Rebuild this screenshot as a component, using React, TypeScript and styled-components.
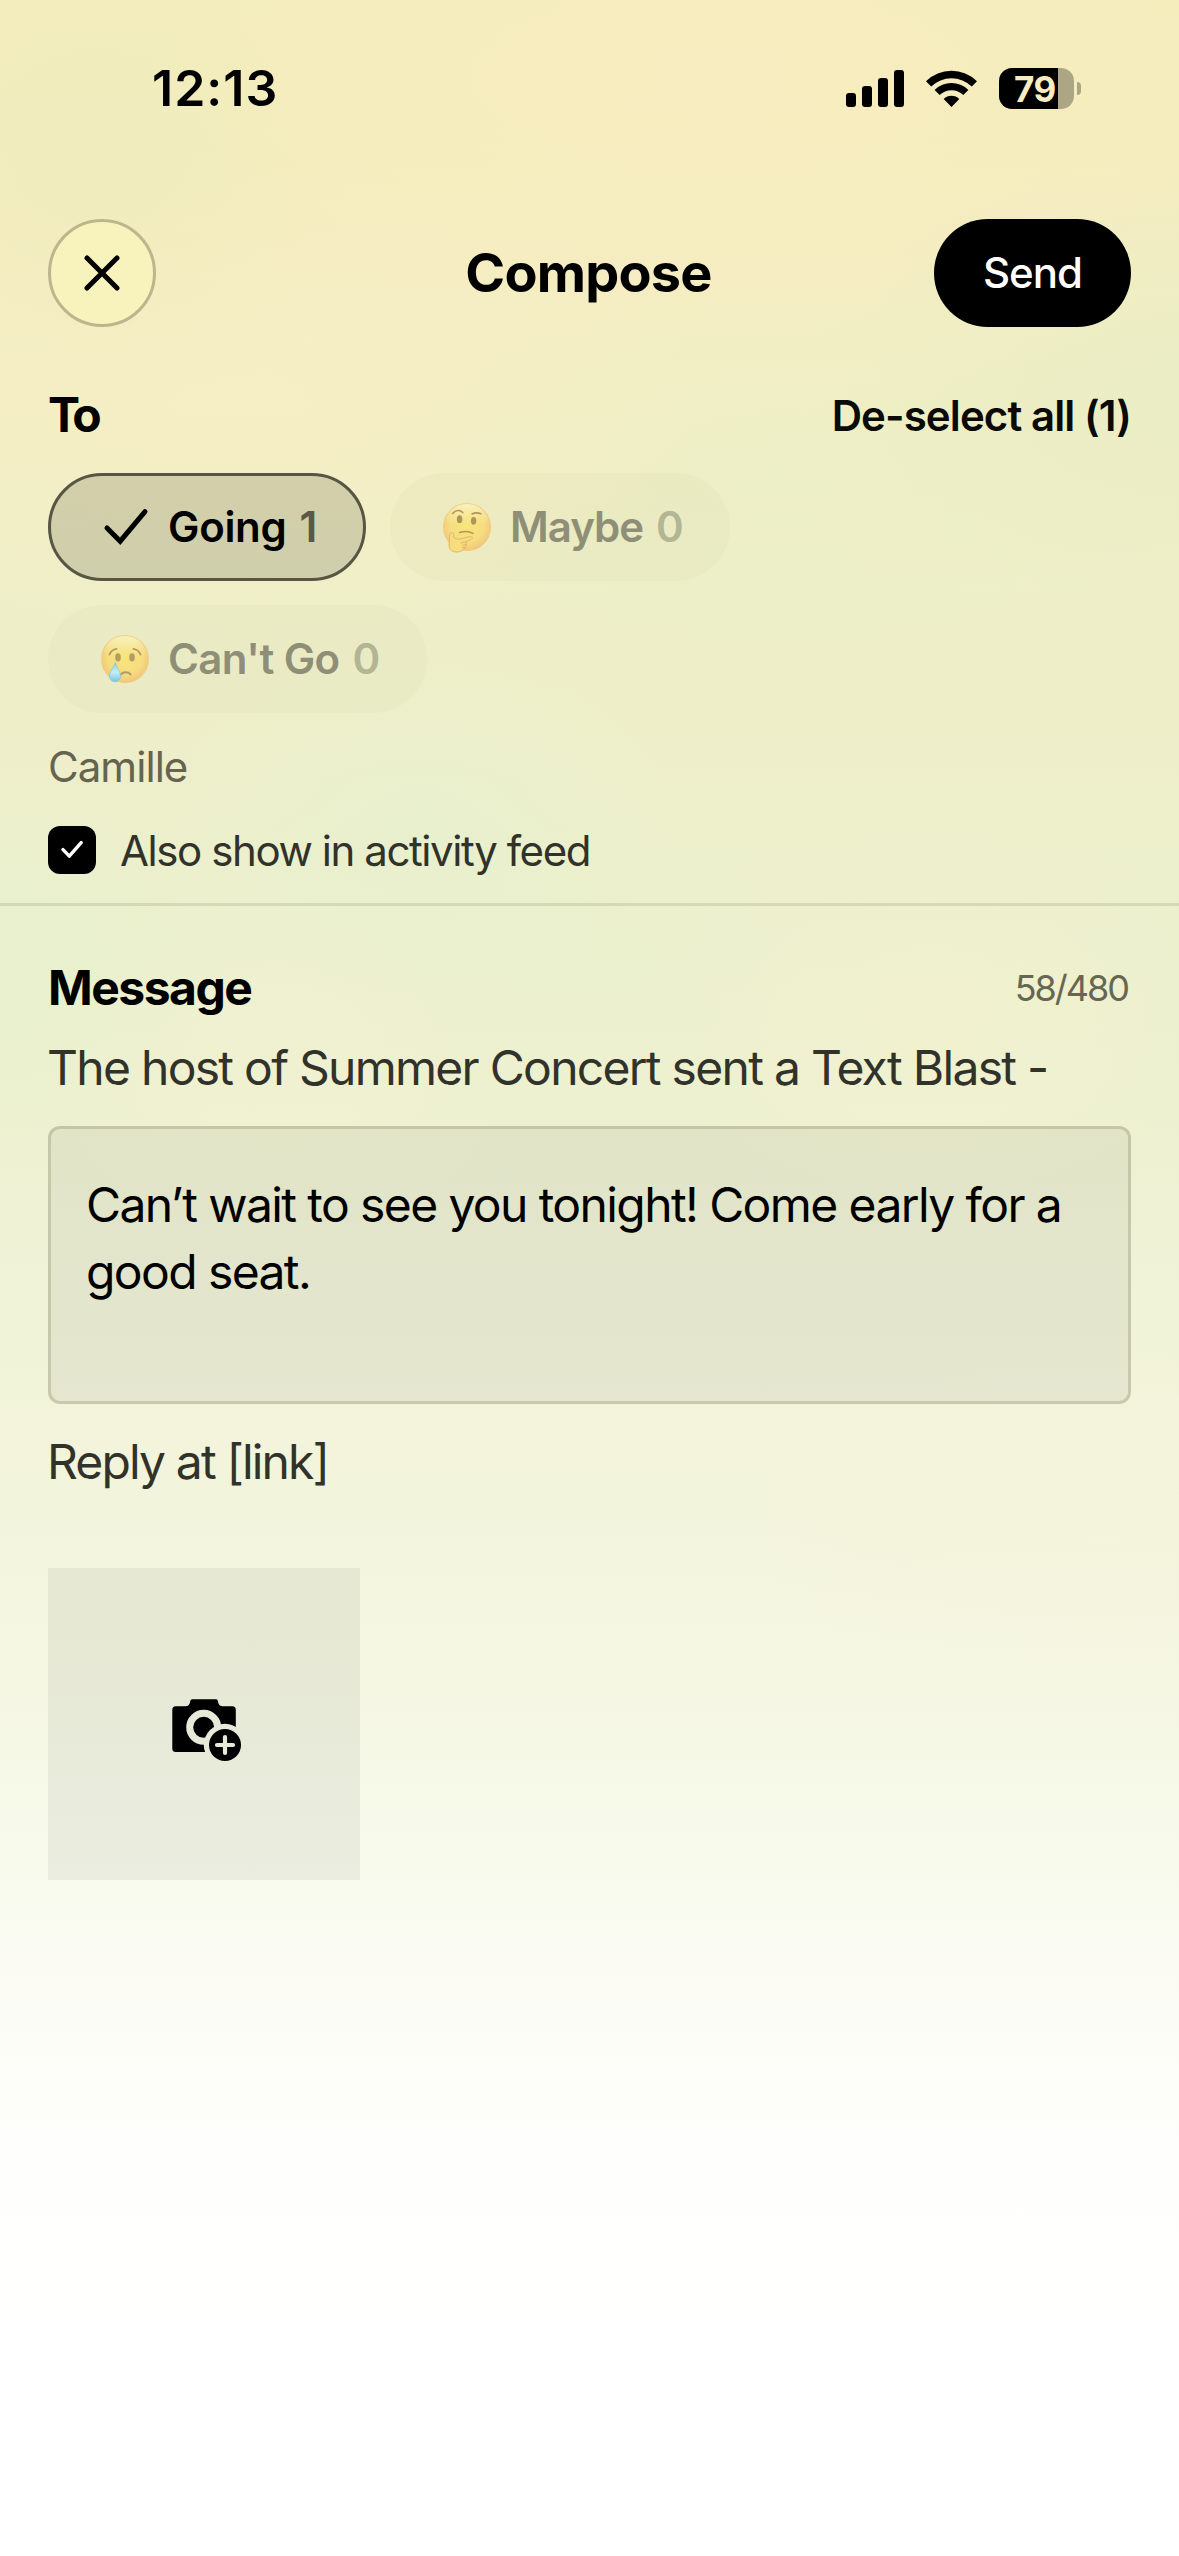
import React from "react";
import styled, { createGlobalStyle } from "styled-components";

const GlobalStyle = createGlobalStyle`
  *, *::before, *::after { box-sizing: border-box; }
  body { margin: 0; background: #fff; }
  button { font: inherit; margin: 0; padding: 0; border: 0; background: none; }
`;

const Screen = styled.main`
  min-height: 2556px;
  width: 1179px;
  overflow: hidden;
  color: #000;
  font-family: Inter, "Liberation Sans", sans-serif;
  background:
    radial-gradient(ellipse 560px 260px at 720px 60px, rgba(248, 236, 192, 0.8), rgba(248, 236, 192, 0)),
    radial-gradient(ellipse 300px 260px at 100px 150px, rgba(238, 236, 189, 0.7), rgba(238, 236, 189, 0)),
    radial-gradient(ellipse 480px 240px at 240px 400px, rgba(247, 238, 197, 0.75), rgba(247, 238, 197, 0)),
    radial-gradient(ellipse 380px 240px at 1179px 390px, rgba(233, 237, 197, 0.85), rgba(233, 237, 197, 0)),
    radial-gradient(ellipse 420px 200px at 780px 480px, rgba(235, 239, 198, 0.7), rgba(235, 239, 198, 0)),
    radial-gradient(ellipse 260px 180px at 420px 830px, rgba(231, 240, 206, 0.7), rgba(231, 240, 206, 0)),
    radial-gradient(ellipse 220px 180px at 0px 960px, rgba(232, 241, 206, 0.8), rgba(232, 241, 206, 0)),
    radial-gradient(ellipse 260px 200px at 280px 1060px, rgba(241, 241, 210, 0.8), rgba(241, 241, 210, 0)),
    radial-gradient(ellipse 300px 200px at 930px 1010px, rgba(242, 241, 207, 0.9), rgba(242, 241, 207, 0)),
    radial-gradient(ellipse 360px 180px at 1100px 1520px, rgba(246, 243, 220, 0.6), rgba(246, 243, 220, 0)),
    linear-gradient(
      180deg,
      #f4edbb 0px,
      #f5edc0 220px,
      #f3eec4 400px,
      #eeefc8 600px,
      #eeefca 760px,
      #ebf0cd 950px,
      #edf1d0 1100px,
      #f0f3d8 1300px,
      #f3f4dc 1500px,
      #f5f7e3 1680px,
      #f8faec 1860px,
      #fcfcf6 2010px,
      #fefefc 2150px,
      #ffffff 2360px
    );
`;

const StatusBar = styled.header`
  display: flex;
  align-items: center;
  justify-content: space-between;
  height: 176px;
  padding: 0 98px 0 152px;
`;

const Clock = styled.time`
  font-size: 50px;
  font-weight: 600;
  line-height: 60px;
  letter-spacing: 1px;
`;

const StatusIcons = styled.div`
  display: flex;
  align-items: center;
  gap: 22px;
`;

const Battery = styled.div`
  display: flex;
  align-items: center;
  gap: 3px;
`;

const BatteryBody = styled.span`
  width: 75px;
  height: 41px;
  padding: 1px 0 0 15px;
  border-radius: 13px;
  background: linear-gradient(90deg, #000 59px, #ada684 59px);
  color: #f6edc0;
  font-size: 35px;
  font-weight: 700;
  line-height: 41px;
  letter-spacing: -0.4px;
`;

const BatteryTip = styled.span`
  width: 4px;
  height: 13px;
  border-radius: 0 5px 5px 0;
  background: #ada684;
`;

const NavBar = styled.nav`
  display: grid;
  grid-template-columns: 1fr auto 1fr;
  align-items: center;
  margin-top: 43px;
  padding: 0 48px;
`;

const CloseButton = styled.button`
  display: grid;
  place-items: center;
  width: 108px;
  height: 108px;
  border: 3px solid #bcb68d;
  border-radius: 50%;
  background: #f8f2bd;
`;

const Title = styled.h1`
  margin: 0;
  padding-right: 2px;
  font-size: 54px;
  font-weight: 650;
  line-height: 64px;
  letter-spacing: -0.8px;
`;

const SendButton = styled.button`
  justify-self: end;
  width: 197px;
  height: 108px;
  padding-bottom: 1px;
  border-radius: 54px;
  background: #000;
  color: #fff;
  font-size: 42px;
  font-weight: 550;
  letter-spacing: -1px;
`;

const Section = styled.section`
  padding: 0 48px;
`;

const SectionHead = styled.div<{ $top: number }>`
  display: flex;
  align-items: center;
  justify-content: space-between;
  height: 60px;
  margin-top: ${(p) => p.$top}px;
`;

const Heading = styled.h2<{ $tracking: number }>`
  margin: 0;
  font-size: 48px;
  font-weight: 700;
  line-height: 60px;
  letter-spacing: ${(p) => p.$tracking}px;
`;

const TextButton = styled.button`
  padding-top: 2px;
  color: #0a0a08;
  font-size: 42px;
  font-weight: 580;
  line-height: 60px;
  letter-spacing: -0.9px;
`;

const Chips = styled.div`
  display: flex;
  flex-wrap: wrap;
  gap: 24px;
  margin-top: 28px;
`;

const Chip = styled.button<{ $selected?: boolean; $width: number }>`
  display: flex;
  align-items: center;
  width: ${(p) => p.$width}px;
  height: 108px;
  padding-left: ${(p) => (p.$selected ? 48 : 51)}px;
  border: ${(p) => (p.$selected ? "3px solid #575544" : "0")};
  border-radius: 54px;
  background: ${(p) => (p.$selected ? "rgba(0, 0, 0, 0.135)" : "rgba(70, 80, 0, 0.024)")};
  color: ${(p) => (p.$selected ? "#000" : "#8f8f78")};
  font-size: 42px;
  font-weight: 580;
`;

const ChipLabel = styled.span<{ $tracking: number }>`
  margin: -1px 0 0 17px;
  letter-spacing: ${(p) => p.$tracking}px;
`;

const ChipCount = styled.span<{ $selected?: boolean }>`
  margin: -1px 0 0 13px;
  color: ${(p) => (p.$selected ? "#5a5848" : "#b3b593")};
`;

const Recipients = styled.p`
  margin: 24px 0 0;
  color: #64644f;
  font-size: 42px;
  line-height: 60px;
  letter-spacing: -0.95px;
`;

const CheckRow = styled.label`
  display: flex;
  align-items: center;
  gap: 24px;
  height: 48px;
  margin-top: 29px;
  color: #31322a;
  font-size: 42px;
  letter-spacing: -1.42px;
`;

const CheckBox = styled.span`
  display: block;
  width: 48px;
  height: 48px;
  border-radius: 12px;
  background: #000;
`;

const Divider = styled.hr`
  height: 3px;
  margin: 29px 0 0;
  border: 0;
  background: rgba(60, 60, 20, 0.13);
`;

const Counter = styled.span`
  padding-right: 3px;
  color: #666753;
  font-size: 36px;
  line-height: 60px;
  letter-spacing: -2px;
`;

const MessageFrame = styled.p<{ $top: number; $tracking: number }>`
  margin: ${(p) => p.$top}px 0 0 -1px;
  color: #31322a;
  font-size: 48px;
  line-height: 60px;
  letter-spacing: ${(p) => p.$tracking}px;
  white-space: nowrap;
`;

const MessageBox = styled.div`
  height: 278px;
  margin-top: 28px;
  padding: 42px 35px;
  border: 3px solid rgba(50, 50, 20, 0.22);
  border-radius: 12px;
  background: rgba(20, 20, 20, 0.055);
  background-clip: padding-box;
  font-size: 48px;
  line-height: 67.2px;
  letter-spacing: -1.6px;
`;

const PhotoTile = styled.button`
  display: grid;
  place-items: center;
  width: 312px;
  height: 312px;
  margin-top: 76px;
  background: rgba(20, 20, 20, 0.06);
`;

const Glyph = styled.svg`
  display: block;
  flex: none;
`;

const SignalIcon = () => (
  <Glyph width="58" height="37" viewBox="0 0 58 37">
    <rect x="0" y="23" width="10" height="14" rx="3" />
    <rect x="16" y="16" width="10" height="21" rx="3" />
    <rect x="32" y="8" width="10" height="29" rx="3" />
    <rect x="48" y="0" width="10" height="37" rx="3" />
  </Glyph>
);

const WifiIcon = () => (
  <Glyph width="51" height="37" viewBox="0 0 51 37">
    <path d="M0 11.2A36.6 36.6 0 0 1 51 11.2L45.8 16.5A29.1 29.1 0 0 0 5.2 16.5Z" />
    <path d="M8.6 19.9A24.2 24.2 0 0 1 42.4 19.9L37.3 25A17 17 0 0 0 13.7 25Z" />
    <path d="M17.7 28.9A11.3 11.3 0 0 1 33.3 28.9L25.5 37Z" />
  </Glyph>
);

const CloseIcon = () => (
  <Glyph width="36" height="36" viewBox="0 0 36 36" stroke="#000" strokeWidth="5" strokeLinecap="round">
    <path d="M3 3L33 33M33 3L3 33" />
  </Glyph>
);

const ChipCheck = () => (
  <Glyph width="52" height="52" viewBox="0 0 52 52" fill="none" stroke="#000" strokeWidth="5" strokeLinecap="round" strokeLinejoin="miter">
    <path d="M8 27L21.2 40.2L46 10.6" />
  </Glyph>
);

const BoxCheck = () => (
  <Glyph width="48" height="48" viewBox="0 0 48 48" fill="none" stroke="#fff" strokeWidth="3.4" strokeLinecap="round" strokeLinejoin="round">
    <path d="M15 23.6L21.3 30.2L33.2 16.6" />
  </Glyph>
);

const FaceFill = ({ id }: { id: string }) => (
  <defs>
    <radialGradient id={id} cx="0.5" cy="0.46" r="0.54">
      <stop offset="0" stopColor="#f7e67a" />
      <stop offset="0.65" stopColor="#f6dd80" />
      <stop offset="1" stopColor="#f0c67a" />
    </radialGradient>
    <linearGradient id={`${id}Shine`} x1="0" y1="0" x2="0" y2="1">
      <stop offset="0" stopColor="#f8f4c4" stopOpacity="0.95" />
      <stop offset="0.45" stopColor="#f8f0b0" stopOpacity="0" />
    </linearGradient>
  </defs>
);

const ThinkingFace = () => (
  <Glyph width="52" height="52" viewBox="0 0 52 52">
    <FaceFill id="thinking" />
    <circle cx="26" cy="26" r="24" fill="url(#thinking)" />
    <circle cx="26" cy="25.5" r="22.6" fill="url(#thinkingShine)" />
    <g fill="none" stroke="#b3945c" strokeWidth="1.6" strokeLinecap="round">
      <path d="M11.6 12.4C14.5 8.6 19.4 8.6 21.8 11.6" />
      <path d="M31 13C34 11.5 37 11.6 39.8 12.8" />
      <path d="M18.6 31.6C23 30 28.5 30.4 32 32.4" />
    </g>
    <ellipse cx="18.6" cy="18.2" rx="2.7" ry="3.9" fill="#ad955c" />
    <ellipse cx="32.6" cy="19.8" rx="2.7" ry="3.9" fill="#ad955c" />
    <path
      d="M10.3 31.6C12.2 31.2 13 33.4 12.8 36.2C14.4 38.2 16.4 38.6 19 37.9L29.5 35.6C31.8 35.2 32 37.4 30 38.4L25.2 40.6C26 44.8 22.5 50.8 16.2 51C9.6 51.2 7.4 47.6 8.2 42L8.8 33.4C8.9 32.2 9.4 31.7 10.3 31.6Z"
      fill="#f7dd7d"
      stroke="#e4b064"
      strokeWidth="0.9"
    />
    <path d="M24.8 40.8L20 42M25.4 43.8L21.6 44.2M24.4 46.8L21.4 46.4" stroke="#e0ad62" strokeWidth="0.9" strokeLinecap="round" />
  </Glyph>
);

const CryingFace = () => (
  <Glyph width="52" height="52" viewBox="0 0 52 52">
    <FaceFill id="crying" />
    <linearGradient id="tear" x1="0" y1="0" x2="0" y2="1">
      <stop offset="0" stopColor="#86cfe0" />
      <stop offset="0.5" stopColor="#c6eef0" />
      <stop offset="1" stopColor="#74c6e4" />
    </linearGradient>
    <circle cx="26" cy="26" r="24" fill="url(#crying)" />
    <circle cx="26" cy="25.5" r="22.6" fill="url(#cryingShine)" />
    <g fill="none" stroke="#b39a63" strokeWidth="1.7" strokeLinecap="round">
      <path d="M10.4 21.6C11.8 18.2 14.4 16.3 17.6 15.9" />
      <path d="M41.6 21.6C40.2 18.2 37.6 16.3 34.4 15.9" />
      <path d="M21.8 41.4C24.4 38.6 29 38.6 31.6 41.4" strokeWidth="2" />
    </g>
    <ellipse cx="19" cy="24.4" rx="2.8" ry="4.1" fill="#b39d62" />
    <ellipse cx="33" cy="24.4" rx="2.8" ry="4.1" fill="#b39d62" />
    <path d="M16.2 29.4C17.8 35 21.6 38.6 21.6 43A5.6 5.8 0 0 1 10.4 43C10.4 38.6 14.6 35 16.2 29.4Z" fill="url(#tear)" stroke="#7cc6d8" strokeWidth="0.7" />
  </Glyph>
);

const CameraPlusIcon = () => (
  <Glyph width="84" height="84" viewBox="-10.3 -17.3 84 84">
    <mask id="cameraCut" maskUnits="userSpaceOnUse" x="-10.3" y="-17.3" width="84" height="84">
      <rect x="-10.3" y="-17.3" width="84" height="84" fill="#fff" />
      <circle cx="31.4" cy="28" r="14" fill="none" stroke="#000" strokeWidth="7" />
      <circle cx="52.7" cy="45.7" r="21.2" fill="#000" />
    </mask>
    <path
      mask="url(#cameraCut)"
      d="M3.5 7H13C16 7 17.6 4.8 18 1.6Q18.2 0 19.8 0H44Q45.4 0 45.6 1.6C46 4.8 47.6 7 50.6 7H60Q63.5 7 63.5 10.5V49.2Q63.5 52.7 60 52.7H3.5Q0 52.7 0 49.2V10.5Q0 7 3.5 7Z"
    />
    <circle cx="52.7" cy="45.7" r="16" />
    <path d="M52.7 37.7V53.7M44.7 45.7H60.7" stroke="#e7ead8" strokeWidth="4.2" strokeLinecap="round" />
  </Glyph>
);

export default function App() {
  return (
    <>
      <GlobalStyle />
      <Screen>
        <StatusBar>
          <Clock>12:13</Clock>
          <StatusIcons>
            <SignalIcon />
            <WifiIcon />
            <Battery>
              <BatteryBody>79</BatteryBody>
              <BatteryTip />
            </Battery>
          </StatusIcons>
        </StatusBar>

        <NavBar>
          <CloseButton aria-label="Close">
            <CloseIcon />
          </CloseButton>
          <Title>Compose</Title>
          <SendButton>Send</SendButton>
        </NavBar>

        <Section>
          <SectionHead $top={58}>
            <Heading $tracking={-4}>To</Heading>
            <TextButton>De-select all (1)</TextButton>
          </SectionHead>
          <Chips>
            <Chip $selected $width={318}>
              <ChipCheck />
              <ChipLabel $tracking={-0.3}>Going</ChipLabel>
              <ChipCount $selected>1</ChipCount>
            </Chip>
            <Chip $width={340}>
              <ThinkingFace />
              <ChipLabel $tracking={-1}>Maybe</ChipLabel>
              <ChipCount>0</ChipCount>
            </Chip>
            <Chip $width={379}>
              <CryingFace />
              <ChipLabel $tracking={-0.6}>Can't Go</ChipLabel>
              <ChipCount>0</ChipCount>
            </Chip>
          </Chips>
          <Recipients>Camille</Recipients>
          <CheckRow>
            <CheckBox>
              <BoxCheck />
            </CheckBox>
            Also show in activity feed
          </CheckRow>
        </Section>

        <Divider />

        <Section>
          <SectionHead $top={52}>
            <Heading $tracking={-1.5}>Message</Heading>
            <Counter>58/480</Counter>
          </SectionHead>
          <MessageFrame $top={20} $tracking={-1.72}>
            The host of Summer Concert sent a Text Blast -
          </MessageFrame>
          <MessageBox>Can’t wait to see you tonight! Come early for a good seat.</MessageBox>
          <MessageFrame $top={28} $tracking={-1.85}>
            Reply at [link]
          </MessageFrame>
          <PhotoTile aria-label="Add photo">
            <CameraPlusIcon />
          </PhotoTile>
        </Section>
      </Screen>
    </>
  );
}
